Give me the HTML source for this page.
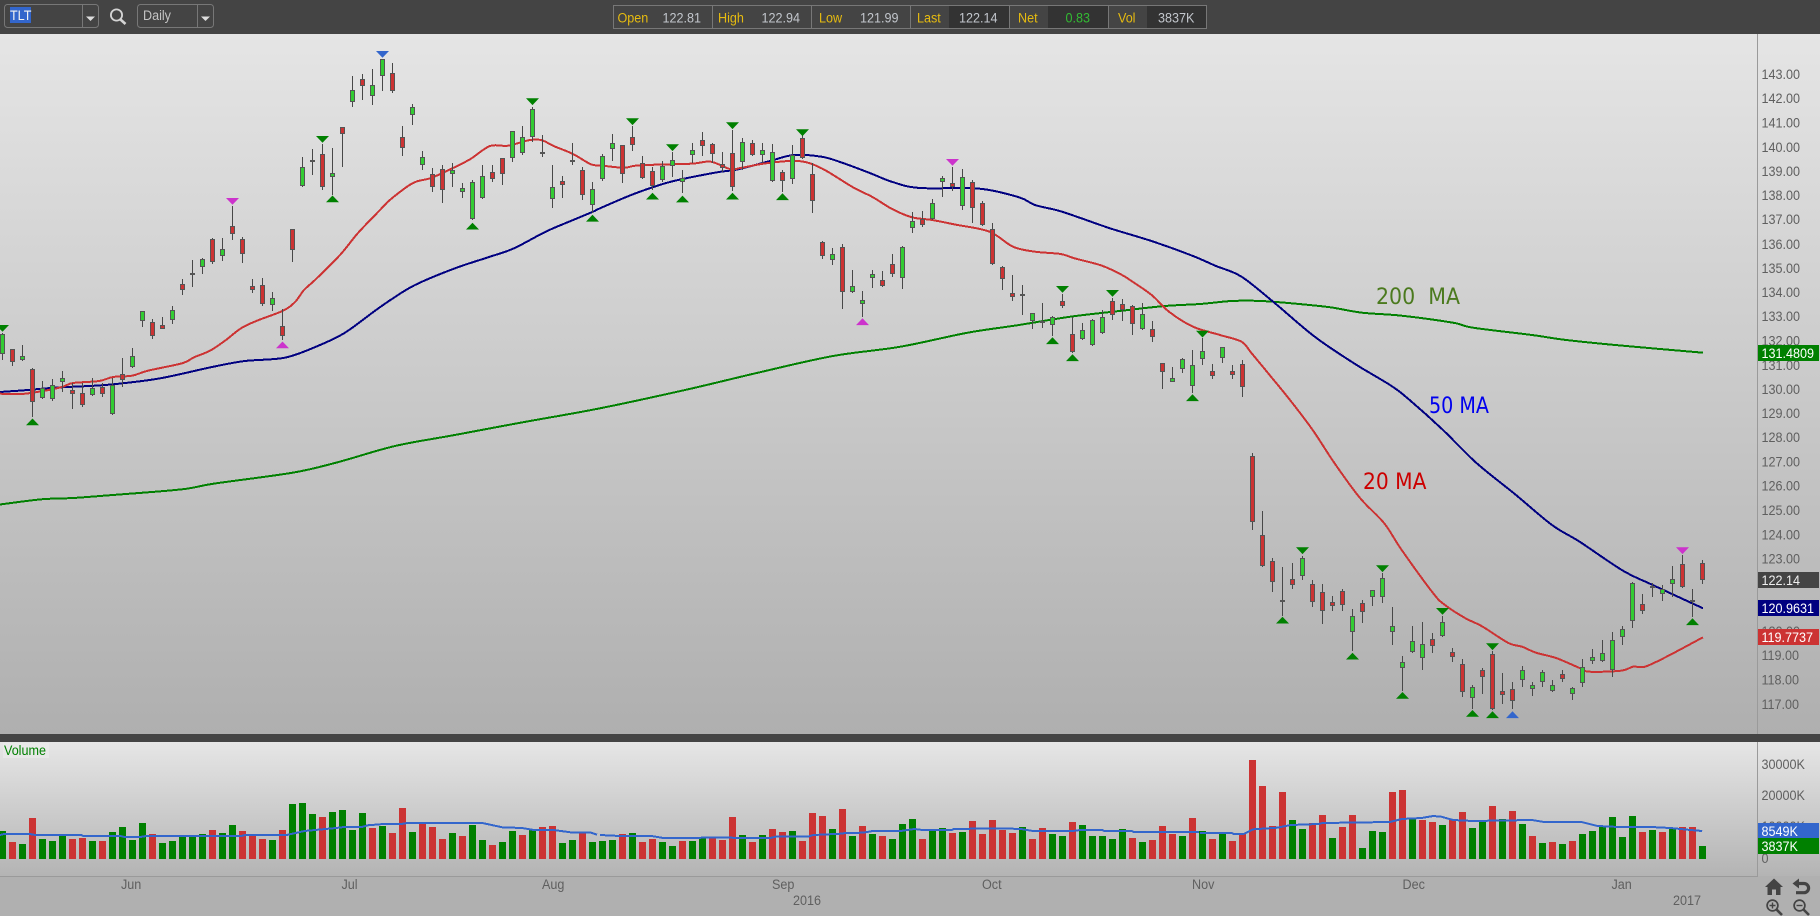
<!DOCTYPE html>
<html>
<head>
<meta charset="utf-8">
<title>TLT Daily Chart</title>
<style>
html,body{margin:0;padding:0;background:#b0b0b0;width:1820px;height:916px;overflow:hidden}
svg{display:block}
text{font-family:"Liberation Sans",sans-serif;font-size:14px;transform-box:fill-box;transform-origin:0 50%;transform:scaleX(.9)}
.ax text{fill:#5f5f5f}
.lb{fill:#e6bb10}
.vl{fill:#c2c6cc}
.wt{fill:#fff}
text.an{font-family:"DejaVu Sans",sans-serif;font-size:22px;transform:none}
</style>
</head>
<body>
<svg id="c" xmlns="http://www.w3.org/2000/svg" width="1820" height="916" viewBox="0 0 1820 916">
<defs>
<linearGradient id="g1" x1="0" y1="0" x2="0" y2="1"><stop offset="0" stop-color="#e5e5e5"/><stop offset="1" stop-color="#afafaf"/></linearGradient>
<linearGradient id="g2" x1="0" y1="0" x2="0" y2="1"><stop offset="0" stop-color="#e6e6e6"/><stop offset="1" stop-color="#b4b4b4"/></linearGradient>
</defs>
<rect width="1820" height="916" fill="#b0b0b0"/>
<rect x="0" y="34" width="1820" height="700" fill="url(#g1)"/>
<rect x="0" y="742" width="1820" height="134" fill="url(#g2)"/>
<rect x="0" y="0" width="1820" height="34" fill="#444"/>
<rect x="0" y="734" width="1820" height="8" fill="#444"/>
<path d="M1757.5 34V734M1757.5 742V876.5H0" stroke="#9a9a9a" fill="none"/>

<!-- toolbar -->
<rect x="4.5" y="4.5" width="94" height="23" rx="3" fill="none" stroke="#777"/>
<path d="M82.5 5V27" stroke="#777"/>
<rect x="10" y="7" width="21" height="16" fill="#3366cc"/>
<text x="10" y="20" fill="#f2f2f2">TLT</text>
<path d="M86 16.5h9l-4.5 4.5z" fill="#ddd"/>
<circle cx="116.5" cy="15" r="5.6" fill="none" stroke="#d4d4d4" stroke-width="1.8"/>
<path d="M120.5 19.5l5 4.5" stroke="#d4d4d4" stroke-width="2.6"/>
<rect x="137.5" y="4.5" width="76" height="23" rx="3" fill="none" stroke="#777"/>
<path d="M197.5 5V27" stroke="#777"/>
<text x="143" y="20" fill="#c4c4c4">Daily</text>
<path d="M201 16.5h9l-4.5 4.5z" fill="#ddd"/>

<!-- info bar -->
<rect x="949" y="6" width="60" height="22" fill="#333"/>
<rect x="1048" y="6" width="60" height="22" fill="#333"/>
<rect x="1147" y="6" width="59" height="22" fill="#333"/>
<rect x="613.5" y="5.5" width="593" height="23" fill="none" stroke="#777"/>
<path d="M712.5 6V28M811.5 6V28M910.5 6V28M1009.5 6V28M1108.5 6V28" stroke="#777"/>
<text x="617.5" y="22.5" class="lb">Open</text><text x="662.5" y="22.5" class="vl">122.81</text>
<text x="718" y="22.5" class="lb">High</text><text x="761.5" y="22.5" class="vl">122.94</text>
<text x="819" y="22.5" class="lb">Low</text><text x="860" y="22.5" class="vl">121.99</text>
<text x="917" y="22.5" class="lb">Last</text><text x="959" y="22.5" class="vl">122.14</text>
<text x="1018" y="22.5" class="lb">Net</text><text x="1065.5" y="22.5" fill="#33bb33">0.83</text>
<text x="1118" y="22.5" class="lb">Vol</text><text x="1158" y="22.5" class="vl">3837K</text>

<g id="lines"></g>
<g id="candles"></g>

<!-- annotations -->
<text x="1376" y="304" class="an" fill="#4b7a1e" textLength="84" lengthAdjust="spacingAndGlyphs" xml:space="preserve">200  MA</text>
<text x="1429" y="413" class="an" fill="#0000ee" textLength="60" lengthAdjust="spacingAndGlyphs">50 MA</text>
<text x="1363" y="489" class="an" fill="#cc0000" textLength="63.5" lengthAdjust="spacingAndGlyphs">20 MA</text>

<!-- price axis -->
<g class="ax">
<text x="1761.5" y="79">143.00</text>
<text x="1761.5" y="103">142.00</text>
<text x="1761.5" y="127.5">141.00</text>
<text x="1761.5" y="152">140.00</text>
<text x="1761.5" y="176">139.00</text>
<text x="1761.5" y="200">138.00</text>
<text x="1761.5" y="224">137.00</text>
<text x="1761.5" y="249">136.00</text>
<text x="1761.5" y="273">135.00</text>
<text x="1761.5" y="297">134.00</text>
<text x="1761.5" y="321">133.00</text>
<text x="1761.5" y="345.5">132.00</text>
<text x="1761.5" y="370">131.00</text>
<text x="1761.5" y="394">130.00</text>
<text x="1761.5" y="418">129.00</text>
<text x="1761.5" y="442">128.00</text>
<text x="1761.5" y="466.5">127.00</text>
<text x="1761.5" y="490.5">126.00</text>
<text x="1761.5" y="515">125.00</text>
<text x="1761.5" y="539.5">124.00</text>
<text x="1761.5" y="563.5">123.00</text>
<text x="1761.5" y="636">120.00</text>
<text x="1761.5" y="660">119.00</text>
<text x="1761.5" y="684.5">118.00</text>
<text x="1761.5" y="709">117.00</text>
<text x="1761.5" y="769">30000K</text>
<text x="1761.5" y="800">20000K</text>
<text x="1761.5" y="831">10000K</text>
<text x="1761.5" y="863">0</text>
<text x="121" y="889">Jun</text>
<text x="341.5" y="889">Jul</text>
<text x="542" y="889">Aug</text>
<text x="772" y="889">Sep</text>
<text x="793" y="905">2016</text>
<text x="982" y="889">Oct</text>
<text x="1192" y="889">Nov</text>
<text x="1402.5" y="889">Dec</text>
<text x="1611.5" y="889">Jan</text>
<text x="1673" y="905">2017</text>
</g>

<!-- value tags -->
<rect x="1758" y="345" width="61" height="16" fill="#008000"/><text x="1761.5" y="358" class="wt">131.4809</text>
<rect x="1758" y="572" width="61" height="16" fill="#444"/><text x="1761.5" y="585" fill="#eee">122.14</text>
<rect x="1758" y="600" width="61" height="16" fill="#000080"/><text x="1761.5" y="613" class="wt">120.9631</text>
<rect x="1758" y="629" width="61" height="16" fill="#cc3333"/><text x="1761.5" y="642" class="wt">119.7737</text>
<rect x="1758" y="823" width="61" height="15" fill="#3366cc"/><text x="1761.5" y="836" class="wt">8549K</text>
<rect x="1758" y="838" width="61" height="16" fill="#008000"/><text x="1761.5" y="851" class="wt">3837K</text>

<!-- Volume label -->
<rect x="3" y="743" width="46" height="15" fill="#eaeaea" opacity=".8"/>
<text x="4" y="755" fill="#008000">Volume</text>

<!-- corner icons -->
<path d="M1774 878.5l-9 8.5h2.5v8h4.5v-5.5h4v5.5h4.5v-8h2.5z" fill="#444"/>
<path d="M1797 883.5h7a4.6 4.6 0 0 1 0 9.2h-8" fill="none" stroke="#444" stroke-width="3.2"/>
<path d="M1799 878.5v10l-6.5-5z" fill="#444"/>
<circle cx="1772.5" cy="905.5" r="5.4" fill="none" stroke="#444" stroke-width="1.7"/>
<path d="M1776.5 909.5l5.5 5.5" stroke="#444" stroke-width="2.6"/>
<path d="M1769.5 905.5h6M1772.5 902.5v6" stroke="#444" stroke-width="1.4"/>
<circle cx="1799.5" cy="905.5" r="5.4" fill="none" stroke="#444" stroke-width="1.7"/>
<path d="M1803.5 909.5l5.5 5.5" stroke="#444" stroke-width="2.6"/>
<path d="M1796.5 905.5h6" stroke="#444" stroke-width="1.4"/>
</svg>
<script>
(function(){
var red="0 393.7 22 394 47 390.3 63 386.7 73 383 99 381 113 377 132 375.7 148 370.7 182 363.3 194 357.3 210 350.7 225 340.7 241 328.3 257 320.7 283 310.7 295 302 304 290 315 280 340 255 358 233 380 210 391 199 413 183 431 178 453 168 470.5 159 490 146 508 145.7 530 140 542 140.3 553.6 146 573 154 591 164.3 601 165.5 624 167.7 639.5 165.3 691 163.7 710.7 161.7 730 169 742 167.7 766 163.3 798 161 821 168 853 187.3 873 197.3 892.6 209.3 912 217.3 932 220 956 224.7 989.5 231.7 1013 246.7 1035 251.7 1060.6 254 1074.5 258.3 1102 265.7 1122 275 1130 280 1151.6 295 1169 311.7 1193 326.7 1220 335 1241.5 341.7 1251.4 353 1271 376.7 1290 400 1312.7 430 1334.4 463 1360 498 1384 523 1401.7 550 1433 593 1445 605 1465 618 1482.7 626.7 1508.4 643 1522 646.7 1536 652.7 1556 658 1579.6 668 1589.5 671.7 1621 670.7 1633 666.7 1645 666.7 1666.6 656.7 1703 637.3";
var navy="0 392 24 390.3 55 387.7 95 385.7 122.6 383.3 162 378 213.5 366.7 245 361 284.7 357.7 316 346.7 344 333.3 373.7 311.7 391.5 299.3 415 285 455 268.3 490 256.7 514 248.3 545.7 231.7 569 221.7 593 211.7 600 208.3 635.6 193.3 671 181.7 714.7 172.7 738 169.3 770 161 793.8 155 821.4 156.7 841 162.3 869 172.7 892.6 182 920 188 979.6 188.7 1019 197.3 1035 205 1058.7 210.7 1078.5 217.3 1110 228.3 1153.6 241.7 1193 256 1216 266 1241.5 276.7 1275 303.3 1314.7 336.7 1354 363.3 1390 385 1409.6 400 1443 430 1476.8 463.3 1516 495 1552 525 1579.6 541.7 1623 570.7 1652.7 585 1703 608.3";
var grn="0 504.5 41.5 499.3 73 498 112.7 495 182 489.3 213.5 483.7 292.6 472.7 336 462.7 395 446 454.7 435 526 421.7 600 408.3 685 390 758 372.7 833 356 900.5 346.7 967.7 332.7 1019 325 1070.5 316.7 1122 310.7 1165 306 1200 304 1231.6 301 1261 301 1299 304 1330.5 307.3 1362 312.7 1401.7 315.7 1453 322.7 1473 327.7 1532 335 1563.8 339.7 1615 345 1703 352.7";
var vm7="0 345 10 342 75 342 90 345 205 345 210 348 305 348 315 351 355 351 370 348 610 348 620 345 725 345 770 333 850 324 870 321 915 321 930 316 970 312 1015 312 1030 309 1220 309 1270 322 1320 324 1350 330 1400 330 1450 338 1495 338 1510 344".split(" ");
var vm8="0 345 50 348 130 348 160 354 235 354 260 353 330 353 360 354 430 354 445 350 525 350 540 345 610 341 620 339 665 338 690 333 760 333 795 327 815 330 890 330 895 327 1010 325 1065 327 1095 333 1195 333 1215 330 1270 330 1275 333 1345 333 1350 336 1515 336".split(" ");
var vm9="0 339 80 339 85 342 110 342 135 328 195 323 230 315 300 312 310 309 480 306 510 297 560 294 590 288 610 290 640 300 690 303 840 300 870 306 965 306 1005 318 1060 321 1140 321 1190 324 1240 330 1270 333".split(" ");
function conv(a,off){var o=[];for(var i=0;i<a.length;i+=2){o.push((off+a[i]/2.529).toFixed(1)+","+(720+a[i+1]/3).toFixed(1));}return o.join(" ");}
function pl(s,c,w){return '<polyline fill="none" stroke="'+c+'" stroke-width="'+w+'" stroke-linejoin="round" points="'+s+'"/>';}
/* Catmull-Rom smoothing for the moving averages */
function spline(s,c,w){
  var a=s.split(" ").map(Number),P=[];
  for(var i=0;i<a.length;i+=2)P.push([a[i],a[i+1]]);
  var d="M"+P[0][0]+" "+P[0][1];
  for(var j=0;j<P.length-1;j++){
    var p0=P[Math.max(j-1,0)],p1=P[j],p2=P[j+1],p3=P[Math.min(j+2,P.length-1)];
    var c1x=p1[0]+(p2[0]-p0[0])/6,c1y=p1[1]+(p2[1]-p0[1])/6,c2x=p2[0]-(p3[0]-p1[0])/6,c2y=p2[1]-(p3[1]-p1[1])/6;
    d+="C"+c1x.toFixed(1)+" "+c1y.toFixed(1)+" "+c2x.toFixed(1)+" "+c2y.toFixed(1)+" "+p2[0]+" "+p2[1];
  }
  return '<path fill="none" stroke="'+c+'" stroke-width="'+w+'" d="'+d+'"/>';
}

/* volume bars: c + top (zoom units) */
var vol="g333 r366 g372 r294 g357 g363 g345 r357 r354 g363 r363 g336 g321 g360 g309 r342 g369 g363 g348 g348 g342 r330 g339 g315 r333 r345 r357 g360 r330 g252 g249 g282 r291 g276 g270 g330 g279 r324 g318 r339 r264 g336 r312 r321 r357 g339 r348 g315 g360 r375 g366 g333 r345 g330 r321 r318 g369 g360 r339 g366 g363 g360 r342 g339 r366 r357 g366 g378 r363 g363 g354 r354 r360 r291 g345 r366 g345 r327 r336 g333 r363 r279 r288 g327 r267 g348 r318 g342 r348 g357 g312 g297 r357 g333 g324 r339 g336 r303 r342 r300 r330 r339 g321 r357 r324 g342 g348 r306 g315 g348 g348 g357 g327 r354 g366 r360 r318 r342 g348 r294 g333 r357 g342 r363 r342 r120 r198 r318 r216 g300 g327 r309 r285 g354 r321 r285 g384 g333 g336 r216 r210 g297 r300 r306 g315 r297 r276 g324 g303 r258 g297 r273 g312 r348 g369 r366 g372 r363 g342 g333 g318 g291 g351 g288 r336 g330 r336 g327 r321 r321 g378".split(" ");
var h="";
var base=859;
for(var i=0;i<vol.length;i++){
  var t=Math.round(720+parseInt(vol[i].slice(1))/3);
  var cx=2+10*i;
  h+='<rect x="'+(cx-3)+'" y="'+t+'" width="7" height="'+(base-t)+'" fill="'+(vol[i][0]=="g"?"#008000":"#cc3333")+'"/>';
}
h+='<g shape-rendering="crispEdges">';
h+=pl(conv(vm7,0),"#3366cc",2)+pl(conv(vm8,600),"#3366cc",2)+pl(conv(vm9,1200),"#3366cc",2);
h+=spline(grn,"#008000",2)+spline(navy,"#000080",2)+spline(red,"#cc3333",2);
h+='</g>';
document.getElementById("lines").innerHTML=h;

/* candles: colour, wickTop, bodyTop, bodyBottom, wickBottom */
var segs=[
[280,"g160,163,221,240 r208,208,245,258 g195,229,241,242 r264,268,365,410 g303,325,353,356 g297,316,356,362 g273,295,302,335 r310,331,338,387 r310,340,374,380 g295,325,344,345 r310,322,341,350 g295,316,401,404 r235,283,299,320 g205,229,262,265 g94,94,122,140 r118,127,167,176 r112,136,143,146 g79,91,121,131"],
[0,"r838,853,869,885 d780,820,820,861 g774,778,800,822 r714,717,785,791 g714,748,767,783 r618,679,701,720 r712,718,761,788 r838,859,866,879 r835,856,911,917 g877,895,914,932 r928,979,1007,1020 r688,688,749,785 g472,502,557,560 d447,481,481,525 r432,463,560,570 g445,520,529,585 r382,382,401,501 g228,271,307,320 r222,238,257,300 g207,256,289,315 g178,178,229,272 r190,220,272,278 r378,412,443,467 g312,322,344,375 g453,472,494,510 r505,523,560,575 r495,508,569,608 g490,511,518,560 g548,565,572,594 g540,547,656,660 g495,529,593,596 r495,517,536,545 r475,475,521,555 g394,394,475,485 g378,412,460,465 g320,328,410,425 d405,457,457,470 g495,562,598,623 r528,544,556,594 d430,481,481,495 r502,511,586,600 g547,568,616,640 g462,469,537,542 g403,430,448,482 r436,436,521,548 r378,412,436,452 r468,490,533,535 r502,514,559,570 g482,499,541,545 g455,481,499,530 g510,535,541,580 g430,451,466,490 r396,421,439,467 r428,433,463,490 r457,493,502,515 r390,460,560,572 g415,427,487,510 r420,430,466,468 g430,451,466,490 g433,457,542,545 r510,517,542,575 g435,466,536,552 r405,415,475,478 r490,523,602,640 r724,727,767,776 g745,763,781,795 r733,742,875,926 g810,858,875,875 g873,900,908,950 g810,823,835,865 r813,841,857,860 r762,793,821,830 g738,742,835,867 g636,664,683,698 r633,658,674,680 g598,610,656,658 g528,535,545,590 r502,550,562,572 g507,532,619,630 r541,547,623,670 r603,610,674,678 r670,688,792,795 r798,802,836,870 r825,880,890,903 d855,883,883,945"],
[280,"g100,100,122,147 d70,123,123,143 g108,112,134,168 r42,64,77,84 r112,163,215,220 g129,151,176,177 g118,120,194,197 g90,112,158,162 r55,64,104,120 r57,73,90,123 r75,79,131,165 g70,103,146,150 r123,148,170,186 r250,250,275,327 g262,295,302,306 g235,238,266,279 g210,256,317,339 g174,214,236,255 r252,274,287,297"],
[0,"g1040,1042,1075,1088 r1095,1113,1124,1136 r1080,1093,1162,1190"],
[430,"r70,79,275,300 r243,316,407,410 r385,392,457,485 d411,511,511,558 r400,446,466,476 g378,385,439,449 r450,463,517,532 r462,487,544,581 r499,517,524,542 r478,484,526,542 g538,559,607,662 r510,520,547,578 g480,481,502,527 g430,445,502,518 g530,589,607,644 g678,697,715,782 g587,634,667,668 g576,643,683,719 r610,628,649,670 g558,577,619,620 r655,667,680,695 r687,703,787,802 g765,772,805,838 r715,721,742,791 r662,673,838,838 r729,784,793,822 r757,778,814,838 g709,721,751,770 g757,766,778,797 g721,727,757,770 g751,766,784,787 r721,733,748,755 g770,775,793,809 g688,712,760,772 g658,682,694,703 g630,670,694,697 g606,631,721,741 g589,598,622,646 g457,460,574,593 r492,523,544,551 d460,469,469,500 g466,478,493,512 g408,448,463,502 r375,403,470,472 d478,510,510,560 r391,400,451,461"]
];
var w="",gb="",rb="",ob="",d="",idx=0;
segs.forEach(function(s){
  s[1].split(" ").forEach(function(it){
    var c=it[0],v=it.slice(1).split(",").map(function(n){return Math.round(s[0]+parseInt(n)/3);});
    var x=2.5+10*idx,l=x-2.5;
    w+="M"+l+" "+v[0]+"h1V"+Math.max(v[3],v[2]+1)+"h-1z";
    w=w; 
    if(c=="d"){d+="M"+l+" "+v[1]+"h5v2h-5z";}
    else{
      var hh=Math.max(v[2]-v[1],4);
      ob+="M"+l+" "+v[1]+"h5v"+hh+"h-5z";
      var r="M"+(l+1)+" "+(v[1]+1)+"h3v"+(hh-2)+"h-3z";
      if(c=="g")gb+=r;else rb+=r;
    }
    idx++;
  });
});
/* wick path: offset so the 1px wick sits on the centre pixel column */
var out='<g shape-rendering="crispEdges"><path transform="translate(2 0)" d="'+w+'" fill="#484848"/><path d="'+d+'" fill="#555"/><path d="'+ob+'" fill="#555"/><path d="'+gb+'" fill="#33cc33"/><path d="'+rb+'" fill="#cc3333"/></g>';

/* markers: index, d/u, colour, top */
var G="#008000",M="#cc33cc",B="#3366cc";
var mk=[[0,"d",G,325],[3,"u",G,418.5],[23,"d",M,198],[28,"u",M,341.5],[32,"d",G,136],[33,"u",G,195.5],[38,"d",B,51],[47,"u",G,222.7],[53,"d",G,98.3],[59,"u",G,214.8],[63,"d",G,118.3],[65,"u",G,192.7],[67,"d",G,144.3],[68,"u",G,195.6],[73,"d",G,122.3],[73,"u",G,192.7],[78,"u",G,193.3],[80,"d",G,129.3],[86,"u",M,318.3],[95,"d",M,159],[105,"u",G,337.3],[106,"d",G,286],[107,"u",G,354.3],[111,"d",G,290],[119,"u",G,394.3],[120,"d",G,330.7],[128,"u",G,616.7],[130,"d",G,547.3],[135,"u",G,652.7],[138,"d",G,565.3],[140,"u",G,692],[144,"d",G,608],[147,"u",G,710],[149,"d",G,643.3],[149,"u",G,711.3],[151,"u",B,711.3],[168,"d",M,547.3],[169,"u",G,618.3]];
mk.forEach(function(m){
  var x=2.5+10*m[0],t=m[3],p;
  if(m[1]=="d")p=(x-6.5)+","+t+" "+(x+6.5)+","+t+" "+x+","+(t+6.8);
  else p=(x-6.5)+","+(t+6.8)+" "+(x+6.5)+","+(t+6.8)+" "+x+","+t;
  out+='<polygon points="'+p+'" fill="'+m[2]+'"/>';
});
document.getElementById("candles").innerHTML=out;
})();
</script>
</body>
</html>
